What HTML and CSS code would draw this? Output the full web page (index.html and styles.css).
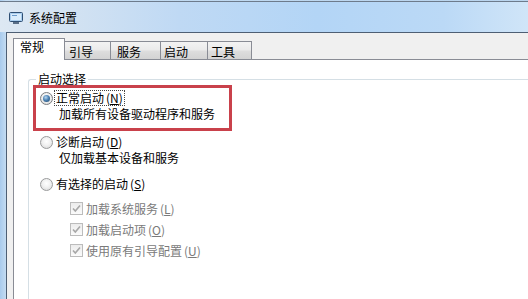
FILE: index.html
```html
<!DOCTYPE html>
<html lang="zh-CN">
<head>
  <meta charset="UTF-8">
  <title>系统配置</title>
  <link rel="stylesheet" href="styles.css">
</head>
<body>
<div class="window">
  <div class="titlebar">
    <svg class="app-icon" width="16" height="14" viewBox="0 0 16 14">
      <rect x="1.5" y="1.5" width="13" height="9" rx="1" fill="#a9cdee" stroke="#2f4f73"></rect>
      <rect x="3" y="3" width="10" height="6" fill="#d9ecfb"></rect>
      <path d="M4 4.5 L9 4.5" stroke="#6b9acb" stroke-width="1"></path>
      <rect x="5" y="11" width="6" height="2" fill="#5a6f88"></rect>
    </svg>
    <span class="title">系统配置</span>
  </div>

  <div class="client">
    <div class="tabs">
      <div class="tab active w-general">常规</div>
      <div class="tab w-boot">引导</div>
      <div class="tab w-services">服务</div>
      <div class="tab w-startup">启动</div>
      <div class="tab w-tools">工具</div>
    </div>

    <div class="page">
      <fieldset class="group">
        <legend>启动选择</legend>

        <div class="option highlight">
          <div class="row">
            <span class="radio checked"></span>
            <span class="label focused">正常启动<span class="key">(<u>N</u>)</span></span>
          </div>
          <div class="desc">加载所有设备驱动程序和服务</div>
        </div>

        <div class="option second">
          <div class="row">
            <span class="radio"></span>
            <span class="label">诊断启动<span class="key">(<u>D</u>)</span></span>
          </div>
          <div class="desc">仅加载基本设备和服务</div>
        </div>

        <div class="option third">
          <div class="row">
            <span class="radio"></span>
            <span class="label">有选择的启动<span class="key">(<u>S</u>)</span></span>
          </div>
          <div class="checks">
            <div class="check-row">
              <span class="checkbox">
                <svg width="11" height="11" viewBox="0 0 11 11"><path d="M2 5.5 L4.3 8 L9 2.5" fill="none" stroke="#a7a7a7" stroke-width="1.6"></path></svg>
              </span>
              <span class="label">加载系统服务<span class="key">(<u>L</u>)</span></span>
            </div>
            <div class="check-row">
              <span class="checkbox">
                <svg width="11" height="11" viewBox="0 0 11 11"><path d="M2 5.5 L4.3 8 L9 2.5" fill="none" stroke="#a7a7a7" stroke-width="1.6"></path></svg>
              </span>
              <span class="label">加载启动项<span class="key">(<u>O</u>)</span></span>
            </div>
            <div class="check-row">
              <span class="checkbox">
                <svg width="11" height="11" viewBox="0 0 11 11"><path d="M2 5.5 L4.3 8 L9 2.5" fill="none" stroke="#a7a7a7" stroke-width="1.6"></path></svg>
              </span>
              <span class="label">使用原有引导配置<span class="key">(<u>U</u>)</span></span>
            </div>
          </div>
        </div>
      </fieldset>
    </div>
  </div>
</div>
</body>
</html>
```

FILE: styles.css
```css
:root {
  --frame: #b9d4ee;
  --frame-line: #4e5f74;
  --face: #f0f0f0;
  --tab-border: #898c95;
  --group-line: #d5dfe5;
  --mark: #c9414b;
  --text: #000;
  --disabled: #7a7a7a;
}

* {
  margin: 0;
  padding: 0;
  box-sizing: border-box;
}

body {
  font-family: "Noto Sans CJK SC", "Liberation Sans", sans-serif;
  font-size: 12px;
  color: var(--text);
  background: var(--frame);
}

.window {
  width: 528px;
  height: 299px;
  overflow: hidden;
  background: linear-gradient(90deg, #a9cbed, #c4dcf2 6px, var(--frame));
}

.titlebar {
  height: 31px;
  border-top: 1px solid #6d7b8c;
  margin-top: 1px;
  padding: 2px 0 0 8px;
  display: flex;
  align-items: center;
  background: linear-gradient(90deg, #dde8f3 0%, #d2e2f2 14%, #bfd9f4 34%, #b3d5f6 60%, #bbd9f6 84%, #d0e5f8 100%);
}

.app-icon {
  flex: none;
}

.title {
  margin-left: 5px;
  font-size: 12px;
  line-height: 14px;
}

.client {
  height: 300px;
  margin-left: 6px;
  border-top: 1px solid var(--frame-line);
  border-left: 1px solid var(--frame-line);
  background: var(--face);
  padding-left: 6px;
}

/* tab strip */
.tabs {
  height: 26px;
  display: flex;
  align-items: flex-end;
}

.tab {
  height: 18px;
  border: 1px solid var(--tab-border);
  border-bottom: none;
  margin-left: -1px;
  padding: 3px 0 0 4px;
  line-height: 14px;
  font-size: 12px;
  background: linear-gradient(#f3f3f3, #ebebeb 45%, #dddddd 55%, #d3d3d3);
}

.tab.active {
  height: 22px;
  margin-left: 0;
  margin-bottom: -1px;
  padding: 1px 0 0 6px;
  background: #fff;
  position: relative;
  z-index: 1;
}

.w-general { width: 52px; }
.w-boot { width: 47px; }
.w-services { width: 51px; padding-left: 6px; }
.w-startup { width: 48px; padding-left: 3px; }
.w-tools { width: 45px; padding-left: 3px; }

.page {
  height: 260px;
  background: #fff;
  border-top: 1px solid var(--tab-border);
  border-left: 1px solid var(--tab-border);
}

/* group box */
.group {
  margin: 13px 0 0 14px;
  height: 240px;
  border: 1px solid var(--group-line);
  border-right: none;
  border-bottom: none;
  border-radius: 3px 0 0 0;
  padding: 0 0 0 4px;
}

.group legend {
  margin-left: 3px;
  padding: 0 2px;
  line-height: 12px;
}

.option {
  padding-left: 7px;
}

.option.highlight {
  width: 199px;
  border: 3px solid var(--mark);
  padding: 2px 0 6px 4px;
}

.option.second {
  margin-top: 3px;
}

.option.third {
  margin-top: 10px;
}

.row {
  display: flex;
  align-items: center;
  height: 16px;
}

.label {
  margin-left: 3px;
  line-height: 14px;
  white-space: nowrap;
}

.label.focused {
  margin-left: 1px;
  padding: 0 1px;
  border: 1px dotted #444;
}

.key {
  margin-left: 2px;
}

.desc {
  margin-left: 19px;
  line-height: 16px;
}

/* radio buttons */
.radio {
  flex: none;
  width: 13px;
  height: 13px;
  border-radius: 50%;
  border: 1px solid #9a9b9c;
  background: radial-gradient(circle at 50% 40%, #ffffff, #f1f1f1 45%, #d4d4d4);
  display: flex;
  align-items: center;
  justify-content: center;
}

.radio.checked {
  border-color: #7b7d80;
}

.radio.checked::after {
  content: "";
  width: 7px;
  height: 7px;
  border-radius: 50%;
  background: radial-gradient(circle at 40% 35%, #b7d7f0, #4f84b5 45%, #173d62);
}

/* disabled checkboxes */
.checks {
  margin: 6px 0 0 30px;
  color: var(--disabled);
}

.check-row {
  display: flex;
  align-items: center;
  height: 21px;
}

.checkbox {
  flex: none;
  width: 13px;
  height: 13px;
  border: 1px solid #bcbcbc;
  background: linear-gradient(#ececec, #fbfbfb);
  display: flex;
  align-items: center;
  justify-content: center;
}
```
